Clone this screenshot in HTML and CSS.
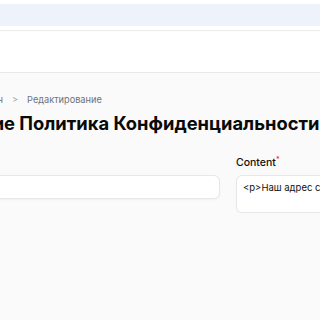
FILE: index.html
```html
<!DOCTYPE html>
<html lang="ru">
<head>
    <meta charset="UTF-8">
    <meta name="viewport" content="width=device-width, initial-scale=1.0">
    <title>Редактирование Политика Конфиденциальности</title>
    <link rel="stylesheet" href="styles.css">
</head>
<body>
    <div class="notice"><div class="notice-band"></div></div>
    <header class="topbar"></header>

    <main class="main">
        <div class="content">
            <nav class="breadcrumbs">
                <span class="crumb crumb-first">Страницы и дизайн</span>
                <span class="crumb-sep">&gt;</span>
                <span class="crumb">Редактирование</span>
            </nav>
            <h1 class="heading">Редактирование Политика Конфиденциальности</h1>

            <form class="form-grid">
                <div class="field">
                    <label class="field-label">Title<sup class="req">*</sup></label>
                    <input class="field-input" type="text" value="">
                </div>
                <div class="field">
                    <label class="field-label">Content<sup class="req">*</sup></label>
                    <div class="field-textarea">&lt;p&gt;Наш адрес сайта: https://example.com&lt;/p&gt;</div>
                </div>
            </form>
        </div>
    </main>
</body>
</html>
```

FILE: styles.css
```css
body {
    margin: 0;
    padding: 0;
    font-family: Inter, "Noto Sans", sans-serif;
    background-color: #fafafa;
    overflow: hidden;
}
.notice {
    background-color: #fff;
    padding: 4px 0;
}
.notice-band {
    height: 22px;
    background-color: #eef2fa;
}
.topbar {
    height: 41px;
    background-color: #fff;
    border-top: 1px solid #ebebeb;
    border-bottom: 1px solid #e8e8e8;
}
.main {
    padding-top: 20px;
}
.content {
    margin-left: -140px;
    width: 736px;
}
.breadcrumbs {
    display: flex;
    align-items: center;
    gap: 9px;
    font-size: 9.2px;
    line-height: 14px;
    color: #6b7280;
}
.crumb-first {
    display: block;
    width: 143px;
    text-align: right;
    white-space: nowrap;
}
.crumb-sep {
    color: #9ca3af;
}
.heading {
    margin: 4px 0 0;
    font-size: 18.35px;
    line-height: 24px;
    font-weight: 700;
    color: #0a0a0a;
    white-space: nowrap;
}
.form-grid {
    display: grid;
    grid-template-columns: 1fr 1fr;
    gap: 16px;
    margin-top: 21px;
}
.field-label {
    display: block;
    font-size: 10.5px;
    line-height: 14px;
    font-weight: 500;
    color: #111;
    margin-bottom: 5px;
}
.req {
    color: #dc2626;
    font-size: 7px;
    vertical-align: top;
    line-height: 1;
}
.field-input {
    box-sizing: border-box;
    display: block;
    width: 100%;
    height: 24px;
    border: 1px solid #e5e7eb;
    border-radius: 6px;
    background-color: #fff;
    box-shadow: 0 1px 2px rgba(0, 0, 0, 0.04);
}
.field-textarea {
    box-sizing: border-box;
    height: 38px;
    padding: 5px 6px;
    font-size: 9.5px;
    line-height: 14px;
    color: #111;
    white-space: nowrap;
    overflow: hidden;
    border: 1px solid #e5e7eb;
    border-radius: 6px;
    background-color: #fff;
    box-shadow: 0 1px 2px rgba(0, 0, 0, 0.04);
}
```
